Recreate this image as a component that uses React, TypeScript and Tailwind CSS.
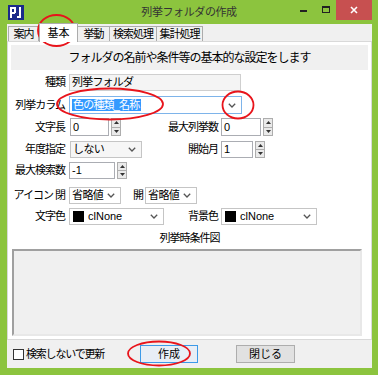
import React from "react";

const font = "font-['Liberation_Sans','Noto_Sans_CJK_JP',sans-serif]";

function Chevron() {
  return (
    <svg width="8" height="5" viewBox="0 0 8 5" className="shrink-0">
      <polyline points="0.8,0.8 4,4 7.2,0.8" fill="none" stroke="#555" strokeWidth="1.3" />
    </svg>
  );
}

function Spin({ h }: { h: string }) {
  return (
    <div className={`ml-[2px] flex w-[10px] flex-col ${h}`}>
      <div className="flex flex-1 items-center justify-center border border-[#adadad] bg-[#eaeaea]">
        <svg width="5" height="3" viewBox="0 0 5 3"><polygon points="0,3 2.5,0 5,3" fill="#333" /></svg>
      </div>
      <div className="flex flex-1 items-center justify-center border border-t-0 border-[#adadad] bg-[#eaeaea]">
        <svg width="5" height="3" viewBox="0 0 5 3"><polygon points="0,0 2.5,3 5,0" fill="#333" /></svg>
      </div>
    </div>
  );
}

function Edit({ value, w, h }: { value: string; w: string; h: string }) {
  return (
    <div className="flex items-center">
      <div className={`flex items-center border border-[#abadb3] bg-white pl-[2px] text-[11px] text-[#000] ${w} ${h}`}>
        {value}
      </div>
      <Spin h={h} />
    </div>
  );
}

function Combo({ children, w, h, bg = "bg-white" }: { children: React.ReactNode; w: string; h: string; bg?: string }) {
  return (
    <div className={`flex items-center justify-between border border-[#c5c5c5] pl-[2px] pr-[5px] text-[11px] tracking-[-0.6px] ${bg} ${w} ${h}`}>
      <div className="flex items-center">{children}</div>
      <Chevron />
    </div>
  );
}

function Label({ text, w }: { text: string; w: string }) {
  return <div className={`shrink-0 text-right text-[11px] leading-none tracking-[-1px] ${w}`}>{text}</div>;
}

export default function App() {
  const tabs = [
    { t: "案内", w: "w-[31px]" },
    { t: "基本", w: "w-[39px]", active: true },
    { t: "挙動", w: "w-[32px]" },
    { t: "検索処理", w: "w-[47px]" },
    { t: "集計処理", w: "w-[46px]" },
  ];

  return (
    <div className={`relative flex h-[375px] w-[378px] flex-col bg-[#8cc43e] text-black ${font}`}>
      {/* title bar */}
      <div className="relative flex h-[24px] items-start">
        <svg width="16" height="15" viewBox="0 0 16 15" className="ml-[8px] mt-[5px]">
          <rect width="16" height="15" fill="#1b2a8a" />
          <rect x="2" y="2" width="2" height="11" fill="#fff" />
          <rect x="2" y="2" width="5" height="2" fill="#fff" />
          <rect x="6" y="2" width="2" height="6" fill="#fff" />
          <rect x="2" y="7" width="5" height="2" fill="#fff" />
          <rect x="11" y="2" width="2" height="10" fill="#fff" />
          <rect x="9" y="11" width="4" height="2" fill="#fff" />
        </svg>
        <div className="absolute left-[0px] right-[0px] top-[4px] text-center text-[11px] tracking-[-0.4px] text-[#333]">
          列挙フォルダの作成
        </div>
        <div className="ml-auto flex items-start">
          <div className="mt-[10px] h-[2px] w-[7px] bg-[#222]" />
          <div className="ml-[15px] mt-[6px] h-[7px] w-[8px] border border-t-2 border-[#222]" />
          <div className="ml-[6px] flex h-[20px] w-[36px] items-center justify-center bg-[#c75050]">
            <svg width="8" height="8" viewBox="0 0 8 8">
              <path d="M1 1 L7 7 M7 1 L1 7" stroke="#fff" strokeWidth="1.6" />
            </svg>
          </div>
          <div className="w-[6px]" />
        </div>
      </div>

      {/* client area */}
      <div className="ml-[7px] mr-[6px] mb-[7px] flex flex-1 flex-col bg-[#f0f0f0]">
        {/* tabs */}
        <div className="flex h-[17px] items-end pl-[1px]">
          {tabs.map((tab) =>
            tab.active ? (
              <div
                key={tab.t}
                className={`relative z-10 -mb-[1px] flex h-[19px] items-center justify-center border border-b-0 border-[#acacac] bg-white text-[11px] ${tab.w}`}
              >
                {tab.t}
              </div>
            ) : (
              <div
                key={tab.t}
                className={`flex h-[15px] items-center justify-center border border-l-0 border-b-0 border-[#acacac] bg-[#f0f0f0] text-[11px] tracking-[-1px] first:border-l ${tab.w}`}
              >
                {tab.t}
              </div>
            )
          )}
        </div>

        {/* tab page */}
        <div className="flex h-[299px] flex-col border border-[#d9d9d9] bg-white">
          <div className="mx-[3px] mt-[3px] flex h-[25px] items-center justify-center bg-[#f0f0f0] text-[12px] tracking-[-1px]">
            フォルダの名前や条件等の基本的な設定をします
          </div>

          {/* 種類 */}
          <div className="mt-[4px] flex items-center">
            <Label text="種類" w="w-[57px]" />
            <div className="ml-[4px] flex h-[17px] w-[172px] items-center border border-[#cfcfcf] bg-[#f4f4f4] pl-[2px] text-[11px] tracking-[-0.8px]">
              列挙フォルダ
            </div>
          </div>

          {/* 列挙カラム */}
          <div className="mt-[5px] flex items-center">
            <Label text="列挙カラム" w="w-[57px]" />
            <div className="ml-[4px] flex h-[18px] w-[173px] items-center justify-between border border-[#7eb4ea] bg-white pl-[2px] pr-[5px]">
              <span className="bg-[#3399ff] px-[1px] text-[11px] leading-[12px] tracking-[-0.8px] text-white">色の種類_名称</span>
              <Chevron />
            </div>
          </div>

          {/* 文字長 / 最大列挙数 */}
          <div className="mt-[4px] flex items-center">
            <div className="flex w-[140px] items-center">
              <Label text="文字長" w="w-[57px]" />
              <div className="ml-[5px]">
                <Edit value="0" w="w-[39px]" h="h-[18px]" />
              </div>
            </div>
            <Label text="最大列挙数" w="w-[70px]" />
            <div className="ml-[3px]">
              <Edit value="0" w="w-[40px]" h="h-[18px]" />
            </div>
          </div>

          {/* 年度指定 / 開始月 */}
          <div className="mt-[5px] flex items-center">
            <div className="flex w-[140px] items-center">
              <Label text="年度指定" w="w-[57px]" />
              <div className="ml-[5px]">
                <Combo w="w-[72px]" h="h-[17px]" bg="bg-[#f6f6f6]">しない</Combo>
              </div>
            </div>
            <Label text="開始月" w="w-[70px]" />
            <div className="ml-[3px]">
              <Edit value="1" w="w-[32px]" h="h-[17px]" />
            </div>
          </div>

          {/* 最大検索数 */}
          <div className="mt-[4px] flex items-center">
            <Label text="最大検索数" w="w-[57px]" />
            <div className="ml-[4px]">
              <Edit value="-1" w="w-[46px]" h="h-[17px]" />
            </div>
          </div>

          {/* アイコン */}
          <div className="mt-[8px] flex items-center">
            <Label text="アイコン 閉" w="w-[57px]" />
            <div className="ml-[4px]">
              <Combo w="w-[52px]" h="h-[17px]">省略値</Combo>
            </div>
            <div className="ml-[12px] text-[11px]">開</div>
            <div className="ml-[1px]">
              <Combo w="w-[52px]" h="h-[17px]">省略値</Combo>
            </div>
          </div>

          {/* 文字色 / 背景色 */}
          <div className="mt-[4px] flex items-center">
            <div className="flex w-[160px] items-center">
              <Label text="文字色" w="w-[57px]" />
              <div className="ml-[4px]">
                <Combo w="w-[95px]" h="h-[17px]">
                  <div className="ml-[1px] h-[11px] w-[11px] bg-black" />
                  <span className="ml-[4px] tracking-normal">clNone</span>
                </Combo>
              </div>
            </div>
            <Label text="背景色" w="w-[50px]" />
            <div className="ml-[3px]">
              <Combo w="w-[96px]" h="h-[17px]">
                <div className="ml-[1px] h-[11px] w-[11px] bg-black" />
                <span className="ml-[4px] tracking-normal">clNone</span>
              </Combo>
            </div>
          </div>

          <div className="mt-[7px] text-center text-[11px] leading-[12px] tracking-[-1px]">列挙時条件図</div>

          <div className="ml-[4px] mt-[5px] h-[87px] w-[350px] border-2 border-b-[#e8e8e8] border-l-[#a0a0a0] border-r-[#e8e8e8] border-t-[#a0a0a0] bg-[#f0f0f0]" />
        </div>

        {/* bottom bar */}
        <div className="flex flex-1 items-center">
          <div className="ml-[6px] h-[11px] w-[11px] border border-[#333] bg-white" />
          <div className="ml-[2px] text-[11px] tracking-[-1.2px]">検索しないで更新</div>
          <div className="ml-[36px] flex h-[18px] w-[58px] items-center justify-center border border-[#3c9ae8] bg-[#e8eef6] text-[11px]">
            作成
          </div>
          <div className="ml-[38px] flex h-[18px] w-[59px] items-center justify-center border border-[#adadad] bg-[#e1e1e1] text-[11px]">
            閉じる
          </div>
        </div>
      </div>

      {/* red annotation ellipses */}
      <svg className="pointer-events-none absolute left-0 top-0" width="378" height="375" viewBox="0 0 378 375">
        <ellipse cx="56.5" cy="30.5" rx="18.5" ry="15.5" fill="none" stroke="#e8141b" strokeWidth="1.8" />
        <ellipse cx="110" cy="104" rx="53" ry="15.5" fill="none" stroke="#e8141b" strokeWidth="1.8" />
        <ellipse cx="238" cy="105" rx="15.5" ry="13.5" fill="none" stroke="#e8141b" strokeWidth="1.8" />
        <ellipse cx="159" cy="353.5" rx="31" ry="12" fill="none" stroke="#e8141b" strokeWidth="1.8" />
      </svg>
    </div>
  );
}
